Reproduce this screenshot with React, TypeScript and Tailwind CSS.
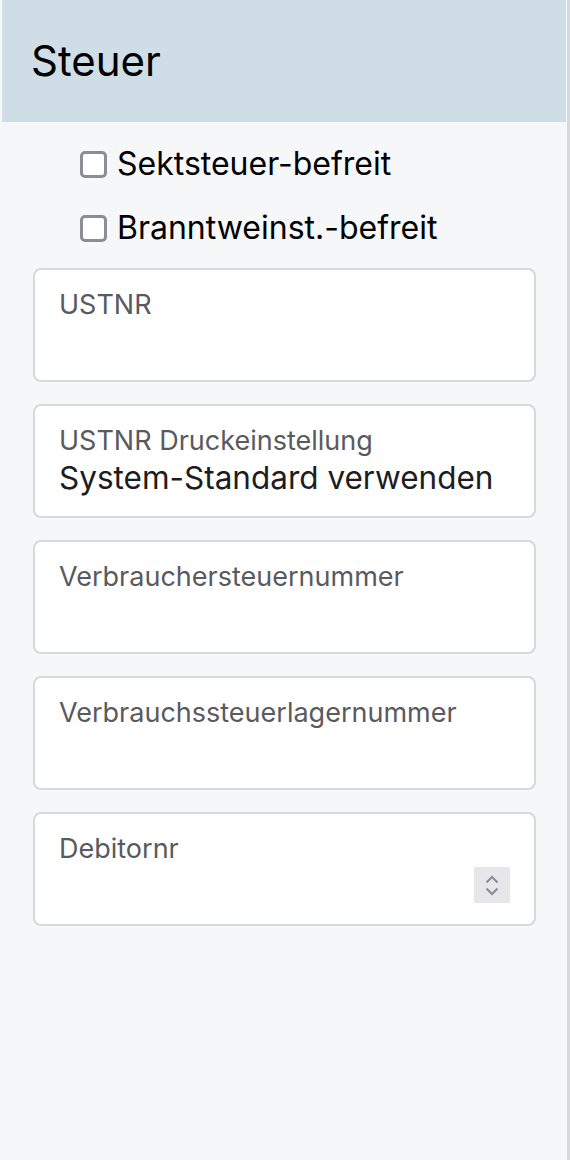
import React from "react";

const font = { fontFamily: "Inter, 'Liberation Sans', sans-serif" };

function Check({ label }: { label: string }) {
    return (
        <label className="flex items-center gap-[10px] h-[64px] cursor-pointer">
            <span className="w-[27px] h-[27px] rounded-[5px] border-[3px] border-[#8d8d98] bg-white" />
            <span className="text-[32px] text-black leading-none">{label}</span>
        </label>
    );
}

function Field({ label, value, spinner }: { label: string; value?: string; spinner?: boolean }) {
    return (
        <div className="relative h-[114px] rounded-[8px] border-2 border-[#d5d8dd] bg-white px-[24px] pt-[19px]">
            <div className="text-[27px] leading-[32px] text-[#5a5a5e]">{label}</div>
            {value && <div className="text-[31.5px] leading-[40px] text-[#1b1d21] mt-[1px]">{value}</div>}
            {spinner && (
                <div className="absolute right-[24px] top-[53px] w-[36px] h-[36px] bg-[#e6e6eb] flex flex-col items-center justify-center gap-[3px]">
                    <svg width="14" height="9" viewBox="0 0 14 9" fill="none">
                        <path d="M1.5 7.5 L7 2 L12.5 7.5" stroke="#8a8a95" strokeWidth="2" />
                    </svg>
                    <svg width="14" height="9" viewBox="0 0 14 9" fill="none">
                        <path d="M1.5 1.5 L7 7 L12.5 1.5" stroke="#8a8a95" strokeWidth="2" />
                    </svg>
                </div>
            )}
        </div>
    );
}

export default function App() {
    return (
        <div className="w-[570px] h-[1160px] flex bg-[#f6f7f8]" style={font}>
            <div className="flex-1 pl-[2px] pr-[1px]">
                <div className="h-[122px] bg-[#cfdde6] flex items-center px-[29px]">
                    <h1 className="text-[42px] text-black leading-none">Steuer</h1>
                </div>
                <div className="pl-[78px] pt-[10px]">
                    <Check label="Sektsteuer-befreit" />
                    <Check label="Branntweinst.-befreit" />
                </div>
                <div className="flex flex-col gap-[22px] pl-[31px] pr-[30px] pt-[8px]">
                    <Field label="USTNR" />
                    <Field label="USTNR Druckeinstellung" value="System-Standard verwenden" />
                    <Field label="Verbrauchersteuernummer" />
                    <Field label="Verbrauchssteuerlagernummer" />
                    <Field label="Debitornr" spinner />
                </div>
            </div>
            <div className="w-[3px] bg-[#d6dade]" />
        </div>
    );
}
